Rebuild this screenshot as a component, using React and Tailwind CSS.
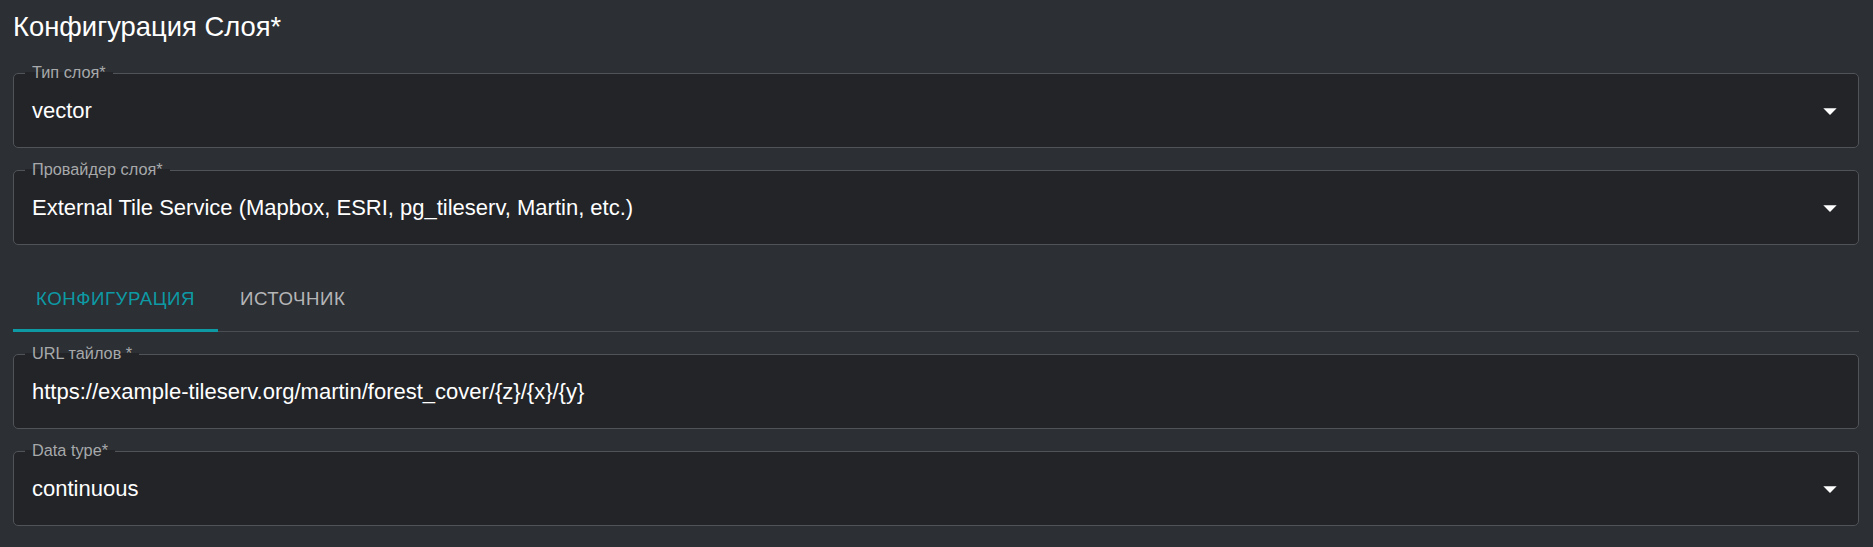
import React from "react";

const FONT = { fontFamily: '"Liberation Sans", Arial, sans-serif' };

function Arrow() {
  return (
    <svg className="ml-auto h-[32px] w-[32px] shrink-0" viewBox="0 0 24 24" fill="#ffffff">
      <path d="M7 10l5 5 5-5z" />
    </svg>
  );
}

function Field({ label, value, select }) {
  return (
    <div className="relative flex h-[75px] items-center rounded-[5px] border border-[#505357] bg-[#222428] pl-[18px] pr-[12px]">
      <span className="absolute left-[11px] top-[-2px] -translate-y-1/2 bg-[linear-gradient(to_bottom,#2c2f33_50%,#222428_50%)] px-[7px] text-[16.3px] leading-[18px] text-[#a7a9ab]">
        {label}
      </span>
      <span className="text-[22px] text-white">{value}</span>
      {select && <Arrow />}
    </div>
  );
}

export default function App() {
  return (
    <div style={FONT} className="min-h-screen w-full bg-[#2c2f33] pl-[13px] pr-[14px]">
      <h1 className="pt-[11px] text-[27.4px] font-normal leading-[32px] text-white">
        Конфигурация Слоя*
      </h1>
      <div className="mt-[30px] flex flex-col gap-[22px]">
        <Field label="Тип слоя*" value="vector" select />
        <Field
          label="Провайдер слоя*"
          value="External Tile Service (Mapbox, ESRI, pg_tileserv, Martin, etc.)"
          select
        />
        <div className="flex h-[65px] border-b border-[#4a4d52]">
          <div className="relative flex w-[205px] items-center justify-center text-[18.67px] uppercase tracking-[0.53px] text-[#0d9aa5]">
            Конфигурация
            <div className="absolute bottom-[-1px] left-0 right-0 h-[3px] bg-[#0d9aa5]" />
          </div>
          <div className="flex items-center px-[22px] text-[18.67px] uppercase tracking-[0.53px] text-[#b4b5b7]">
            Источник
          </div>
        </div>
        <Field
          label="URL тайлов *"
          value="https://example-tileserv.org/martin/forest_cover/{z}/{x}/{y}"
        />
        <Field label="Data type*" value="continuous" select />
      </div>
    </div>
  );
}
